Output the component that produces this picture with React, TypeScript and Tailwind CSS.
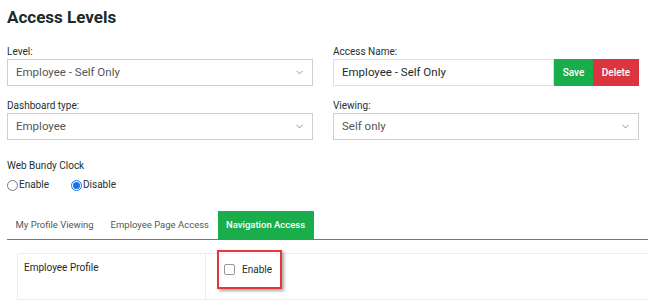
import { ChevronDown } from 'lucide-react'

const font = { fontFamily: 'Roboto, "Liberation Sans", sans-serif' }

function Select({ value }: { value: string }) {
  return (
    <div className="h-[27px] border border-[#cfcfcf] bg-white flex items-center justify-between pl-[8px] pr-[7px] text-[11.5px] text-[#555]">
      <span>{value}</span>
      <ChevronDown size={11} strokeWidth={1.5} className="text-[#666]" />
    </div>
  )
}

function Radio({ checked, label }: { checked?: boolean; label: string }) {
  return (
    <label className="flex items-center gap-[1px]">
      {checked ? (
        <span className="w-[11px] h-[11px] rounded-full border border-[#1a73e8] flex items-center justify-center">
          <span className="w-[7px] h-[7px] rounded-full bg-[#1a73e8]" />
        </span>
      ) : (
        <span className="w-[11px] h-[11px] rounded-full border border-[#777] bg-white" />
      )}
      <span>{label}</span>
    </label>
  )
}

export default function App() {
  return (
    <main className="w-[648px] h-[303px] overflow-hidden bg-white text-[#22302f]" style={font}>
      <div className="pl-[7px] pt-[6px]">
        <h1 className="text-[17px] font-bold text-[#1b2a2a] leading-[22px]">Access Levels</h1>

        <div className="grid grid-cols-[306px_306px] gap-x-[20px] mt-[17px]">
          <div>
            <div className="text-[10px] leading-[14px]">Level:</div>
            <Select value="Employee - Self Only" />
          </div>
          <div>
            <div className="text-[10px] leading-[14px]">Access Name:</div>
            <div className="flex h-[27px]">
              <div className="flex-1 border border-[#dedede] flex items-center pl-[8px] text-[11.5px] text-[#1e2a2a]">
                Employee - Self Only
              </div>
              <button className="w-[39px] bg-[#1aad4b] text-white text-[10px] font-medium">Save</button>
              <button className="w-[46px] bg-[#dc3540] text-white text-[10px] font-medium">Delete</button>
            </div>
          </div>
          <div className="mt-[13px]">
            <div className="text-[10px] leading-[14px]">Dashboard type:</div>
            <Select value="Employee" />
          </div>
          <div className="mt-[13px]">
            <div className="text-[10px] leading-[14px]">Viewing:</div>
            <Select value="Self only" />
          </div>
        </div>

        <div className="mt-[19px] text-[10px] leading-[14px]">Web Bundy Clock</div>
        <div className="flex gap-[22px] mt-[5px] text-[10px] leading-[14px]">
          <Radio label="Enable" />
          <Radio checked label="Disable" />
        </div>

        <div className="mt-[19px] flex h-[29px] border-b-[1.5px] border-[#1aad4b] text-[9.5px] whitespace-nowrap">
          <div className="px-[8.5px] flex items-center text-[#4a5a5a]">My Profile Viewing</div>
          <div className="px-[8.5px] flex items-center text-[#4a5a5a]">Employee Page Access</div>
          <div className="px-[8.5px] flex items-center bg-[#1aad4b] text-white font-medium">
            Navigation Access
          </div>
        </div>

        <div className="ml-[10px] mt-[13px] border-t border-l border-[#ececec] grid grid-cols-[188px_1fr]">
          <div className="h-[46px] border-r border-b border-[#ececec] pl-[6px] pt-[6px] text-[10px] text-[#1e2a2a]">
            Employee Profile
          </div>
          <div className="h-[46px] border-b border-[#ececec] relative">
            <div className="absolute left-[11px] top-[-4px] w-[65px] h-[39px] border-2 border-[#e8343b] shadow-[2px_2px_3px_rgba(0,0,0,0.35)] flex items-center gap-[7px] pl-[5px] text-[10px] text-[#1e2a2a]">
              <span className="w-[11px] h-[11px] border border-[#999] rounded-[2px] bg-white" />
              <span>Enable</span>
            </div>
          </div>
        </div>
      </div>
    </main>
  )
}
